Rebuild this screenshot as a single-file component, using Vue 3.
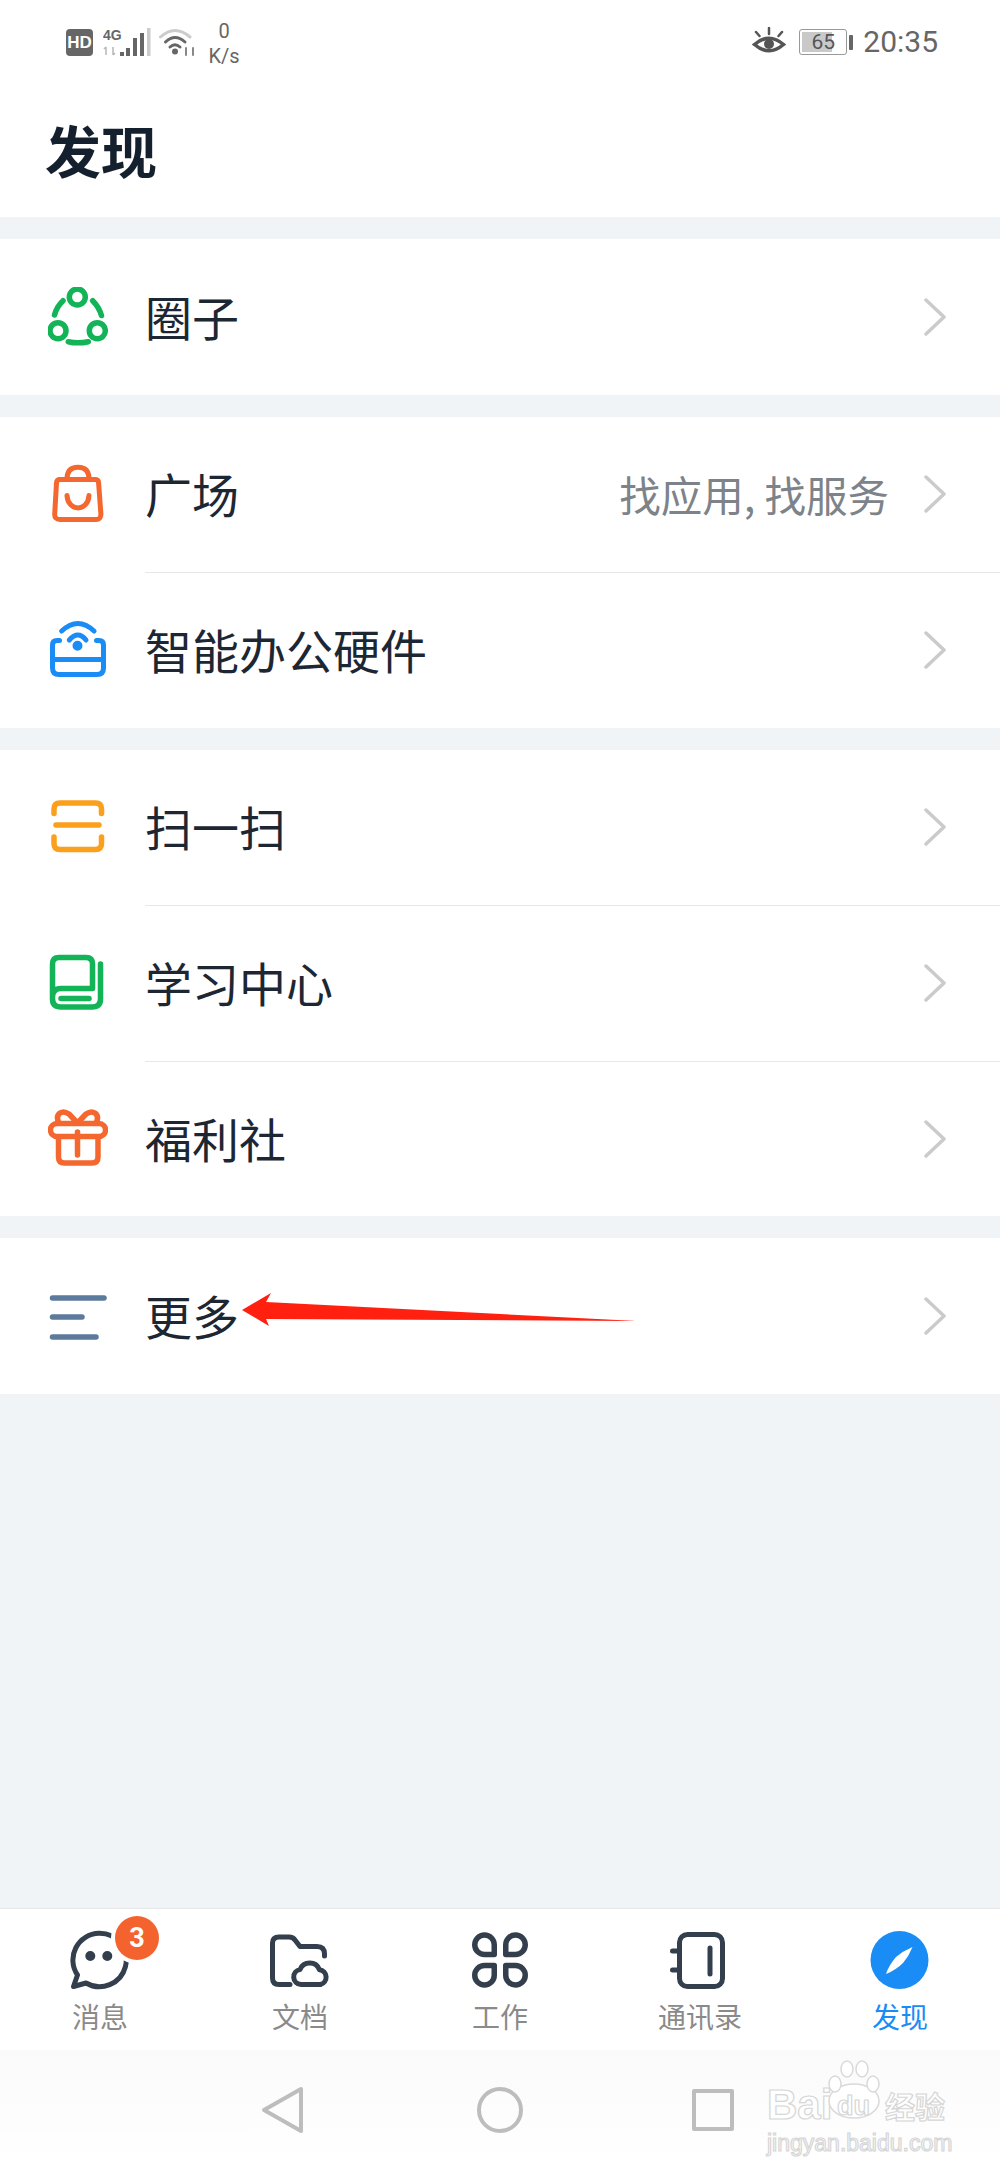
<template>
  <div class="page">
    <header class="top">
      <div class="status">
        <div class="status-left">
          <span class="hd">HD</span>
          <svg class="signal" width="50" height="32" viewBox="0 0 50 32">
            <text x="0" y="13" class="net">4G</text>
            <path d="M3 20v8M1 22l2-2M10 20v8M12 26l-2 2" stroke="#bbb" stroke-width="1.6" fill="none" />
            <rect x="17" y="25" width="4" height="4" fill="#666" />
            <rect x="23" y="21" width="4" height="8" fill="#666" />
            <rect x="30" y="11" width="4" height="18" fill="#666" />
            <rect x="37" y="6" width="4" height="23" fill="#666" />
            <rect x="44" y="1" width="3.5" height="28" fill="#ccc" />
          </svg>
          <svg class="wifi" width="36" height="30" viewBox="0 0 36 30" fill="none" stroke-linecap="round">
            <path d="M1.5 10Q16-3 31 10" stroke="#ccc" stroke-width="3" />
            <path d="M6.5 15Q16 6 26 15" stroke="#666" stroke-width="3" />
            <path d="M11 20Q16 15.500 21 20" stroke="#666" stroke-width="3" />
            <circle cx="16" cy="24.500" r="3" fill="#666" />
            <path d="M27 21v7M34 21v7" stroke="#888" stroke-width="2" />
          </svg>
          <div class="speed"><span>0</span><span>K/s</span></div>
        </div>
        <div class="status-right">
          <svg width="34" height="28" viewBox="0 0 34 28" fill="none">
            <path d="M2.500 17.500Q17 5 31.500 17.500Q17 30 2.500 17.500Z" stroke="#555" stroke-width="3.500" />
            <circle cx="17" cy="17" r="5" fill="#555" />
            <path d="M17 1v6M4 5l3.500 4M30 5l-3.500 4" stroke="#555" stroke-width="2.500" stroke-linecap="round" />
          </svg>
          <div class="battery">
            <div class="battery-box"><div class="battery-fill" :style="{ width: battery + '%' }"></div><span>{{ battery }}</span></div>
            <i></i>
          </div>
          <span class="time">20:35</span>
        </div>
      </div>
      <h1>发现</h1>
    </header>

    <section v-for="(group, i) in groups" :key="i" class="group">
      <div v-for="item in group" :key="item.label" class="row">
        <svg class="icon" viewBox="0 0 60 60" fill="none" :stroke="item.color" :color="item.color" stroke-linecap="round" stroke-linejoin="round" v-html="icons[item.icon]"></svg>
        <div class="row-body">
          <span class="label">{{ item.label }}</span>
          <span v-if="item.sub" class="sub">{{ item.sub }}</span>
          <svg class="chevron" width="24" height="38" viewBox="0 0 24 38" fill="none">
            <path d="M3 2l18 17L3 36" stroke="#cbcbcb" stroke-width="3.500" stroke-linecap="round" stroke-linejoin="round" />
          </svg>
        </div>
      </div>
    </section>

    <div class="fill"></div>

    <nav class="tabs">
      <div v-for="tab in tabs" :key="tab.label" class="tab" :class="{ active: tab.active }">
        <div class="tab-icon">
          <svg width="60" height="60" viewBox="0 0 60 60" fill="none" stroke="#333f4d" stroke-linecap="round" stroke-linejoin="round" v-html="icons[tab.icon]"></svg>
          <span v-if="tab.badge" class="badge">{{ tab.badge }}</span>
        </div>
        <span class="tab-label">{{ tab.label }}</span>
      </div>
    </nav>

    <div class="nav">
      <svg width="60" height="60" viewBox="0 0 60 60" fill="none" stroke="#bdbdbd" stroke-width="4" stroke-linejoin="round">
        <path d="M44 9v42L7 30Z" />
      </svg>
      <svg width="60" height="60" viewBox="0 0 60 60" fill="none" stroke="#bdbdbd" stroke-width="4">
        <circle cx="30" cy="30" r="21" />
      </svg>
      <svg width="60" height="60" viewBox="0 0 60 60" fill="none" stroke="#bdbdbd" stroke-width="4" stroke-linejoin="round">
        <rect x="11" y="11" width="38" height="38" />
      </svg>
      <div class="watermark">
        <div class="wm-top">
          <span class="wm-bai">Bai</span>
          <svg class="paw" width="54" height="60" viewBox="0 0 54 60" fill="#fff" stroke="#d9d9d9" stroke-width="1.500">
            <ellipse cx="27" cy="41" rx="25" ry="17" />
            <ellipse cx="8" cy="24" rx="6" ry="8" />
            <ellipse cx="20" cy="9" rx="6" ry="8" />
            <ellipse cx="35" cy="9" rx="6" ry="8" />
            <ellipse cx="46" cy="24" rx="6" ry="8" />
          </svg>
          <span class="wm-du">du</span>
          <span class="wm-jy">经验</span>
        </div>
        <div class="wm-url">jingyan.baidu.com</div>
      </div>
    </div>

    <!-- annotation drawn over the screenshot -->
    <svg class="arrow" width="1000" height="60" viewBox="0 1280 1000 60">
      <path d="M242 1310L271 1293L266 1302L637 1321L266 1319L269 1326Z" fill="#ff2010" />
    </svg>
  </div>
</template>

<script setup>
const battery = 65;

const icons = {
  circle: `<g stroke-width="5.500"><circle cx="29.300" cy="10" r="8" /><circle cx="10" cy="43.700" r="8" /><circle cx="49.300" cy="43.700" r="8" /><path d="M6.500 28Q8.500 20 15 13.700M44.700 13.700Q51 20 53.500 28.500M20.300 54.700Q30 57 40.300 54.700" /></g>`,
  bag: `<g stroke-width="5"><path d="M12 15.500H47Q50.500 15.500 50.600 19L52.900 50Q53 55.500 48 55.500H12Q6.500 55.500 6.700 50L8.500 19Q8.700 15.500 12 15.500Z" /><path d="M19 15C19 6 24 3.200 30 3.200C36 3.200 41 6 41 15" /><path d="M19 31.500C20 48 40 48 41 31.500" /></g>`,
  router: `<g stroke-width="5"><path d="M13.700 11Q30-4 46 11" /><path d="M21.300 20Q30 10 38 20" /><circle cx="29.500" cy="25.700" r="2.500" fill="currentColor" /><path d="M11.500 20.500H9Q4.500 20.500 4.500 25V48Q4.500 54.500 11 54.500H49Q55.500 54.500 55.500 48V25Q55.500 20.500 51 20.500H48.500" /><path d="M5 39.500H55" /></g>`,
  scan: `<g stroke-width="5.500"><path d="M6 16.500V12Q6 6 12 6H47.500Q53.500 6 53.500 12V16.500" /><path d="M6 40V46.500Q6 52.500 12 52.500H47.500Q53.500 52.500 53.500 46.500V40" /><path d="M8 28H51" /></g>`,
  book: `<g stroke-width="5.500"><path d="M4.500 44V11Q4.500 4.500 11 4.500H38Q44.500 4.500 44.500 11V35.500H13Q4.500 35.500 4.500 44V46Q4.500 54 13 54H44Q52.500 54 52.500 46V11" /><path d="M13 45.500H41" /></g>`,
  gift: `<g stroke-width="5.500"><rect x="2.500" y="15.500" width="55" height="13" rx="6.500" /><path d="M10.500 29V49Q10.500 55 16.500 55H44Q50 55 50 49V29" /><path d="M29.500 15L21 6Q16 2.500 12 5Q7.500 8.500 11 15" /><path d="M29.500 15L38 6Q43 2.500 47 5Q51.500 8.500 48 15" /><path d="M29.500 24V47" /></g>`,
  menu: `<g stroke-width="5.500"><path d="M4.500 12H56M4.500 31H34M4.500 51H48" /></g>`,
  chat: `<g stroke-width="5"><path d="M29 3.300A26.700 26.700 0 1 1 16 53L3.500 56.500L7.500 45A26.700 26.700 0 0 1 29 3.300Z" /><circle cx="20.300" cy="26" r="2.500" fill="#333f4d" /><circle cx="37.300" cy="26" r="2.500" fill="#333f4d" /></g>`,
  folder: `<g stroke-width="5"><path d="M20 54.500H9Q2.500 54.500 2.500 48V13Q2.500 7 9 7H19Q23 7 25 10L30 16.500H47Q54.500 16.500 54.500 24V26" /><path d="M31 54.500A7.500 7.500 0 0 1 30 39.600A10.500 10.500 0 0 1 49.500 39.800A7.500 7.500 0 0 1 50.500 54.500Z" /></g>`,
  apps: `<g stroke-width="5.500"><path d="M14.500 5A9.750 9.750 0 0 1 24.250 14.750V24.500H14.500A9.750 9.750 0 0 1 14.500 5Z" /><path d="M45.500 5A9.750 9.750 0 0 0 35.750 14.750V24.500H45.500A9.750 9.750 0 0 0 45.500 5Z" /><path d="M14.500 55A9.750 9.750 0 0 0 24.250 45.250V35.500H14.500A9.750 9.750 0 0 0 14.500 55Z" /><path d="M45.500 55A9.750 9.750 0 0 1 35.750 45.250V35.500H45.500A9.750 9.750 0 0 1 45.500 55Z" /></g>`,
  contacts: `<g stroke-width="5"><rect x="9.500" y="4.500" width="43" height="52" rx="8" /><path d="M2.500 21H7M2.500 40H7" /><path d="M40 18V44" /></g>`,
  compass: `<circle cx="29.500" cy="30" r="29" fill="#1a8cf5" stroke="none" /><path d="M42.500 17Q33 21 26 27Q19 35 16 44Q26 40 33 33Q39 26 42.500 17Z" fill="#fff" stroke="none" />`,
};

const groups = [
  [{ label: "圈子", icon: "circle", color: "#12b457" }],
  [
    { label: "广场", icon: "bag", color: "#f4672f", sub: "找应用, 找服务" },
    { label: "智能办公硬件", icon: "router", color: "#1a8cf5" },
  ],
  [
    { label: "扫一扫", icon: "scan", color: "#fba01c" },
    { label: "学习中心", icon: "book", color: "#12b457" },
    { label: "福利社", icon: "gift", color: "#f4672f" },
  ],
  [{ label: "更多", icon: "menu", color: "#5c7a9c" }],
];

const tabs = [
  { label: "消息", icon: "chat", badge: 3 },
  { label: "文档", icon: "folder" },
  { label: "工作", icon: "apps" },
  { label: "通讯录", icon: "contacts" },
  { label: "发现", icon: "compass", active: true },
];
</script>

<style>
html,
body {
  margin: 0;
  background: #fff;
}
</style>

<style scoped>
.page {
  position: relative;
  display: flex;
  flex-direction: column;
  height: 2167px;
  overflow: hidden;
  background: #f0f4f7;
  font-family: "Noto Sans CJK SC", "Noto Sans", sans-serif;
  color: #1d2733;
}

.top {
  height: 217px;
  background: #fff;
}

.status {
  display: flex;
  justify-content: space-between;
  height: 85px;
  padding: 0 62px 0 66px;
  color: #666;
}

.status-left,
.status-right {
  display: flex;
  align-items: flex-start;
  padding-top: 27px;
}

.hd {
  width: 27px;
  height: 27px;
  margin-top: 2px;
  border-radius: 4px;
  background: #666;
  color: #fff;
  font: bold 17px/27px "Liberation Sans", sans-serif;
  text-align: center;
}

.signal {
  margin-left: 10px;
}

.net {
  font: bold 14px "Liberation Sans", sans-serif;
  fill: #666;
}

.wifi {
  margin-left: 6px;
}

.speed {
  display: flex;
  flex-direction: column;
  align-items: center;
  width: 36px;
  margin: -8px 0 0 11px;
  font: 20px/25px Roboto, sans-serif;
}

.battery {
  display: flex;
  align-items: center;
  margin: 2px 10px 0 13px;
}

.battery-box {
  position: relative;
  width: 46px;
  height: 24px;
  border: 1px solid #999;
  border-radius: 3px;
  text-align: center;
  font: 21px/24px Roboto, sans-serif;
  color: #555;
}

.battery-box span {
  position: relative;
}

.battery-fill {
  position: absolute;
  top: 2px;
  bottom: 2px;
  left: 2px;
  background: #c9c9c9;
}

.battery i {
  width: 4px;
  height: 15px;
  margin-left: 2px;
  border-radius: 1px;
  background: #666;
}

.time {
  font: 30px/30px Roboto, sans-serif;
}

h1 {
  margin: 34px 0 0 45px;
  font-size: 56px;
  line-height: 60px;
  font-weight: 700;
  color: #15202e;
}

.group {
  margin-top: 22px;
  background: #fff;
}

.row {
  display: flex;
  align-items: center;
  height: 155.500px;
}

.icon {
  flex: none;
  width: 60px;
  height: 60px;
  margin: 0 37px 0 48px;
}

.row-body {
  flex: 1;
  display: flex;
  align-items: center;
  height: 100%;
  padding-right: 53px;
  box-sizing: border-box;
}

.row + .row .row-body {
  border-top: 1px solid #e7e7e7;
}

.label {
  flex: 1;
  margin-top: -2px;
  font-size: 47px;
  line-height: 60px;
}

.sub {
  margin-right: 34px;
  font-size: 41.500px;
  line-height: 60px;
  color: #7d8389;
}

.fill {
  flex: 1;
}

.tabs {
  display: flex;
  height: 141px;
  border-top: 1px solid #e8e8e8;
  background: #fff;
}

.tab {
  flex: 1;
  display: flex;
  flex-direction: column;
  align-items: center;
  padding-top: 21px;
}

.tab-icon {
  position: relative;
  height: 60px;
}

.tab-icon svg {
  display: block;
}

.badge {
  position: absolute;
  top: -14px;
  left: 45px;
  width: 44px;
  height: 44px;
  border-radius: 50%;
  box-shadow: 0 0 0 4px #fff;
  background: #f4622e;
  color: #fff;
  font: bold 27px/44px Roboto, sans-serif;
  text-align: center;
}

.tab-label {
  margin-top: 8px;
  font-size: 28px;
  line-height: 36px;
  color: #8a8a8a;
}

.active .tab-label {
  color: #1a8cf5;
}

.nav {
  position: relative;
  display: flex;
  justify-content: center;
  gap: 153px;
  height: 117px;
  padding-top: 30px;
  box-sizing: border-box;
  background: linear-gradient(#fafafa, #fff);
}

.watermark {
  position: absolute;
  top: 35px;
  left: 767px;
  width: 180px;
  color: #fff;
  -webkit-text-stroke: 1.200px #d6d6d6;
  font-family: "Liberation Sans", sans-serif;
}

.wm-top {
  position: relative;
  height: 40px;
  font-weight: 700;
}

.wm-bai {
  font-size: 42px;
  line-height: 40px;
}

.wm-du {
  position: absolute;
  left: 70px;
  top: 2px;
  font-size: 27px;
  line-height: 38px;
}

.paw {
  position: absolute;
  top: -25px;
  left: 60px;
}

.wm-jy {
  position: absolute;
  top: 1px;
  right: 2px;
  font-family: "Noto Sans CJK SC", sans-serif;
  font-size: 30px;
  line-height: 38px;
}

.wm-url {
  margin-top: 4px;
  font-size: 23px;
  line-height: 28px;
  white-space: nowrap;
}

.arrow {
  position: absolute;
  top: 1280px;
  left: 0;
}
</style>
